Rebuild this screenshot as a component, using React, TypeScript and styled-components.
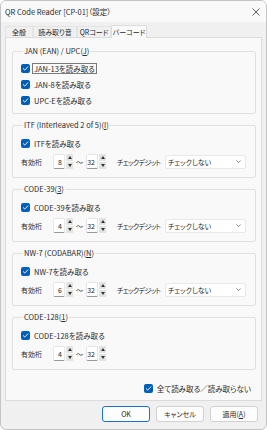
import React from "react";
import styled, { createGlobalStyle } from "styled-components";

const Global = createGlobalStyle`
  html, body { margin: 0; padding: 0; background: #ffffff; }
  body {
    font-family: "Noto Sans CJK JP", "Noto Sans", sans-serif;
    font-feature-settings: "palt";
    color: #2a2a2a;
  }
  * { box-sizing: border-box; }
`;

const Win = styled.div`
  width: 267px;
  height: 430px;
  background: #f0f0f0;
  border: 1px solid #c4c4c4;
  border-radius: 6px;
  overflow: hidden;
  display: flex;
  flex-direction: column;
`;

const TitleBar = styled.div`
  height: 21px;
  flex: none;
  display: flex;
  align-items: center;
  justify-content: space-between;
  padding: 0 6px 0 4px;
  background: #f9f9f9;
  font-size: 7.5px;
`;

const Body = styled.div`
  flex: 1;
  display: flex;
  flex-direction: column;
  padding: 2px 4px 0 4px;
`;

const TabStrip = styled.div`
  height: 13px;
  flex: none;
  display: flex;
  align-items: flex-end;
`;

const Tab = styled.div<{ $active?: boolean; $w: number }>`
  width: ${(p) => p.$w}px;
  height: ${(p) => (p.$active ? 13 : 11)}px;
  display: flex;
  align-items: center;
  justify-content: center;
  font-size: 7px;
  white-space: nowrap;
  background: ${(p) => (p.$active ? "#f9f9f9" : "#f0f0f0")};
  border: 1px solid ${(p) => (p.$active ? "#dcdcdc" : "#e4e4e4")};
  border-bottom: none;
  margin-bottom: ${(p) => (p.$active ? -1 : 0)}px;
  position: relative;
  z-index: ${(p) => (p.$active ? 1 : 0)};
`;

const Panel = styled.div`
  flex: 1;
  background: #f9f9f9;
  border: 1px solid #dcdcdc;
  display: flex;
  flex-direction: column;
  gap: 6px;
  padding: 8px 5px 0 6px;
`;

const Group = styled.fieldset<{ $h: number }>`
  margin: 0;
  height: ${(p) => p.$h}px;
  flex: none;
  border: 1px solid #e0e0e0;
  border-radius: 2px;
  padding: 0 0 0 8px;
  display: flex;
  flex-direction: column;
  min-width: 0;
`;

const Legend = styled.legend`
  font-size: 7.5px;
  line-height: 10px;
  padding: 0 1px;
  margin-left: 2px;
  white-space: nowrap;
`;

const Acc = styled.span`
  text-decoration: underline;
  text-underline-offset: 1px;
`;

const Rows = styled.div<{ $pt: number }>`
  display: flex;
  flex-direction: column;
  padding-top: ${(p) => p.$pt}px;
`;

const CheckRow = styled.label`
  height: 16px;
  display: flex;
  align-items: center;
  gap: 2px;
  font-size: 7.5px;
  white-space: nowrap;
`;

const Box = styled.span`
  width: 9px;
  height: 9px;
  flex: none;
  border-radius: 2px;
  background: #005fb8;
  display: flex;
  align-items: center;
  justify-content: center;
`;

const CheckText = styled.span<{ $focus?: boolean }>`
  padding: 0 1px;
  line-height: 9px;
  border: 1px ${(p) => (p.$focus ? "solid #7a7a7a" : "solid transparent")};
`;

const ValueRow = styled.div`
  height: 15px;
  margin-top: 3px;
  display: flex;
  align-items: center;
  font-size: 7px;
  white-space: nowrap;
`;

const RowLabel = styled.span<{ $w: number; $ml?: number; $tight?: boolean }>`
  width: ${(p) => p.$w}px;
  margin-left: ${(p) => p.$ml ?? 0}px;
  flex: none;
  white-space: nowrap;
  letter-spacing: ${(p) => (p.$tight ? -0.6 : 0)}px;
`;

const Spin = styled.div`
  width: 20px;
  height: 15px;
  display: flex;
  flex: none;
`;

const SpinField = styled.div`
  flex: 1;
  background: #ffffff;
  border: 1px solid #e6e6e6;
  border-bottom-color: #9a9a9a;
  border-radius: 2px 0 0 2px;
  display: flex;
  align-items: center;
  justify-content: flex-end;
  padding-right: 2px;
  font-size: 7px;
`;

const SpinBtns = styled.div`
  width: 8px;
  display: flex;
  flex-direction: column;
  gap: 1px;
  background: #ffffff;
  padding: 0 0 0 1px;
`;

const SpinBtn = styled.div`
  flex: 1;
  background: #e3e3e3;
  display: flex;
  align-items: center;
  justify-content: center;
`;

const Tilde = styled.span`
  width: 13px;
  flex: none;
  text-align: center;
  font-size: 7px;
`;

const Select = styled.div`
  width: 81px;
  height: 14px;
  flex: none;
  background: #ffffff;
  border: 1px solid #e8e8e8;
  border-radius: 2px;
  display: flex;
  align-items: center;
  justify-content: space-between;
  padding: 0 4px 0 2px;
  font-size: 7px;
`;

const AllRow = styled.div`
  display: flex;
  justify-content: flex-end;
  padding: 4px 3px 0 0;
`;

const Footer = styled.div`
  height: 28px;
  flex: none;
  display: flex;
  justify-content: flex-end;
  align-items: flex-start;
  gap: 6px;
  padding: 5px 4px 0 0;
`;

const Button = styled.div<{ $primary?: boolean }>`
  width: 48px;
  height: 16px;
  display: flex;
  align-items: center;
  justify-content: center;
  font-size: 7px;
  background: #fdfdfd;
  border: 1px solid ${(p) => (p.$primary ? "#1a73c8" : "#d2d2d2")};
  border-radius: 3px;
`;

const Check = () => (
  <Box>
    <svg width="7" height="7" viewBox="0 0 7 7">
      <path d="M1.3 3.7 L2.8 5.1 L5.8 1.9" fill="none" stroke="#fff" strokeWidth="0.9" strokeLinecap="round" strokeLinejoin="round" />
    </svg>
  </Box>
);

const CheckItem = ({ children, focus }: { children: React.ReactNode; focus?: boolean }) => (
  <CheckRow>
    <Check />
    <CheckText $focus={focus}>{children}</CheckText>
  </CheckRow>
);

const Spinner = ({ value }: { value: string }) => (
  <Spin>
    <SpinField>{value}</SpinField>
    <SpinBtns>
      <SpinBtn>
        <svg width="4" height="3" viewBox="0 0 4 3"><path d="M0 3 L2 0 L4 3 Z" fill="#333" /></svg>
      </SpinBtn>
      <SpinBtn>
        <svg width="4" height="3" viewBox="0 0 4 3"><path d="M0 0 L2 3 L4 0 Z" fill="#333" /></svg>
      </SpinBtn>
    </SpinBtns>
  </Spin>
);

const DigitsRow = ({ from, withCheck = true }: { from: string; withCheck?: boolean }) => (
  <ValueRow>
    <RowLabel $w={32}>有効桁</RowLabel>
    <Spinner value={from} />
    <Tilde>～</Tilde>
    <Spinner value="32" />
    {withCheck && (
      <>
        <RowLabel $w={48} $ml={11} $tight>チェックデジット</RowLabel>
        <Select>
          <span>チェックしない</span>
          <svg width="5" height="3" viewBox="0 0 5 3">
            <path d="M0.4 0.4 L2.5 2.5 L4.6 0.4" fill="none" stroke="#666" strokeWidth="0.7" />
          </svg>
        </Select>
      </>
    )}
  </ValueRow>
);

const BarGroup = ({ legend, check, from, withCheck = true }: { legend: React.ReactNode; check: string; from: string; withCheck?: boolean }) => (
  <Group $h={58}>
    <Legend>{legend}</Legend>
    <Rows $pt={5}>
      <CheckItem>{check}</CheckItem>
      <DigitsRow from={from} withCheck={withCheck} />
    </Rows>
  </Group>
);

export default function App() {
  return (
    <>
      <Global />
      <Win>
        <TitleBar>
          <span>QR Code Reader [CP-01]（設定）</span>
          <svg width="8" height="8" viewBox="0 0 8 8">
            <path d="M0.5 0.5 L7.5 7.5 M7.5 0.5 L0.5 7.5" stroke="#333" strokeWidth="0.8" />
          </svg>
        </TitleBar>
        <Body>
          <TabStrip>
            <Tab $w={28}>全般</Tab>
            <Tab $w={44}>読み取り音</Tab>
            <Tab $w={34}>QRコード</Tab>
            <Tab $w={36} $active>バーコード</Tab>
          </TabStrip>
          <Panel>
            <Group $h={68}>
              <Legend>JAN (EAN) / UPC(<Acc>J</Acc>)</Legend>
              <Rows $pt={4}>
                <CheckItem focus>JAN-13を読み取る</CheckItem>
                <CheckItem>JAN-8を読み取る</CheckItem>
                <CheckItem>UPC-Eを読み取る</CheckItem>
              </Rows>
            </Group>
            <BarGroup legend={<>ITF (Interleaved 2 of 5)(<Acc>I</Acc>)</>} check="ITFを読み取る" from="8" />
            <BarGroup legend={<>CODE-39(<Acc>3</Acc>)</>} check="CODE-39を読み取る" from="4" />
            <BarGroup legend={<>NW-7 (CODABAR)(<Acc>N</Acc>)</>} check="NW-7を読み取る" from="6" />
            <BarGroup legend={<>CODE-128(<Acc>1</Acc>)</>} check="CODE-128を読み取る" from="4" withCheck={false} />
            <AllRow>
              <CheckItem>全て読み取る／読み取らない</CheckItem>
            </AllRow>
          </Panel>
          <Footer>
            <Button $primary>OK</Button>
            <Button>キャンセル</Button>
            <Button>適用(<Acc>A</Acc>)</Button>
          </Footer>
        </Body>
      </Win>
    </>
  );
}
